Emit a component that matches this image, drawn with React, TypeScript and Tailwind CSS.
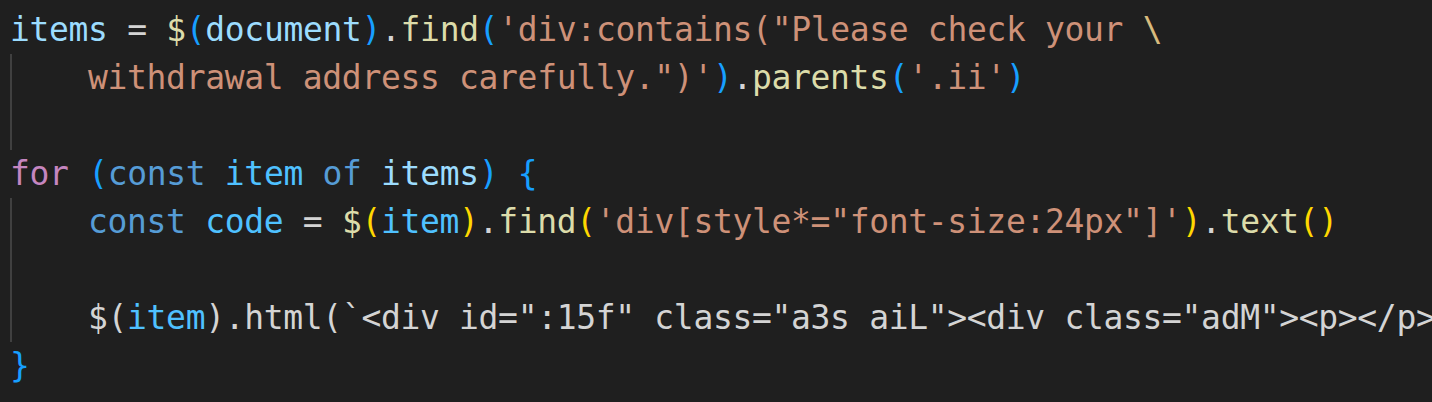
type Tok = [string, string]

const C = {
  v: 'text-[#9cdcfe]',
  c: 'text-[#4fc1ff]',
  fn: 'text-[#dcdcaa]',
  op: 'text-[#d4d4d4]',
  s: 'text-[#ce9178]',
  esc: 'text-[#d7ba7d]',
  kw: 'text-[#569cd6]',
  ctl: 'text-[#c586c0]',
  b1: 'text-[#ffd700]',
  b3: 'text-[#179fff]',
}

const lines: { indent: boolean; toks: Tok[] }[] = [
  {
    indent: false,
    toks: [
      [C.v, 'items'],
      [C.op, ' = '],
      [C.fn, '$'],
      [C.b3, '('],
      [C.v, 'document'],
      [C.b3, ')'],
      [C.op, '.'],
      [C.fn, 'find'],
      [C.b3, '('],
      [C.s, `'div:contains("Please check your `],
      [C.esc, '\\'],
    ],
  },
  {
    indent: true,
    toks: [
      [C.s, `withdrawal address carefully.")'`],
      [C.b3, ')'],
      [C.op, '.'],
      [C.fn, 'parents'],
      [C.b3, '('],
      [C.s, `'.ii'`],
      [C.b3, ')'],
    ],
  },
  { indent: true, toks: [] },
  {
    indent: false,
    toks: [
      [C.ctl, 'for'],
      [C.op, ' '],
      [C.b3, '('],
      [C.kw, 'const'],
      [C.op, ' '],
      [C.c, 'item'],
      [C.op, ' '],
      [C.kw, 'of'],
      [C.op, ' '],
      [C.v, 'items'],
      [C.b3, ')'],
      [C.op, ' '],
      [C.b3, '{'],
    ],
  },
  {
    indent: true,
    toks: [
      [C.kw, 'const'],
      [C.op, ' '],
      [C.c, 'code'],
      [C.op, ' = '],
      [C.fn, '$'],
      [C.b1, '('],
      [C.c, 'item'],
      [C.b1, ')'],
      [C.op, '.'],
      [C.fn, 'find'],
      [C.b1, '('],
      [C.s, `'div[style*="font-size:24px"]'`],
      [C.b1, ')'],
      [C.op, '.'],
      [C.fn, 'text'],
      [C.b1, '()'],
    ],
  },
  { indent: true, toks: [] },
  {
    indent: true,
    toks: [
      [C.op, '$('],
      [C.c, 'item'],
      [C.op, ').html(`<div id=":15f" class="a3s aiL"><div class="adM"><p></p></div></div>`)'],
    ],
  },
  { indent: false, toks: [[C.b3, '}']] },
]

export default function App() {
  return (
    <div className="w-[1432px] h-[402px] overflow-hidden bg-[#1f1f1f] pt-[6px] pl-[10px] font-['DejaVu_Sans_Mono',monospace] text-[33px] tracking-[-0.34px] leading-[48px] whitespace-pre">
      {lines.map((line, i) => (
        <div key={i} className="flex h-[48px] items-stretch">
          {line.indent && <span className="inline-block w-[78px] shrink-0 border-l-2 border-[#404040]" />}
          <span>
            {line.toks.map(([cls, text], j) => (
              <span key={j} className={cls}>
                {text}
              </span>
            ))}
          </span>
        </div>
      ))}
    </div>
  )
}
